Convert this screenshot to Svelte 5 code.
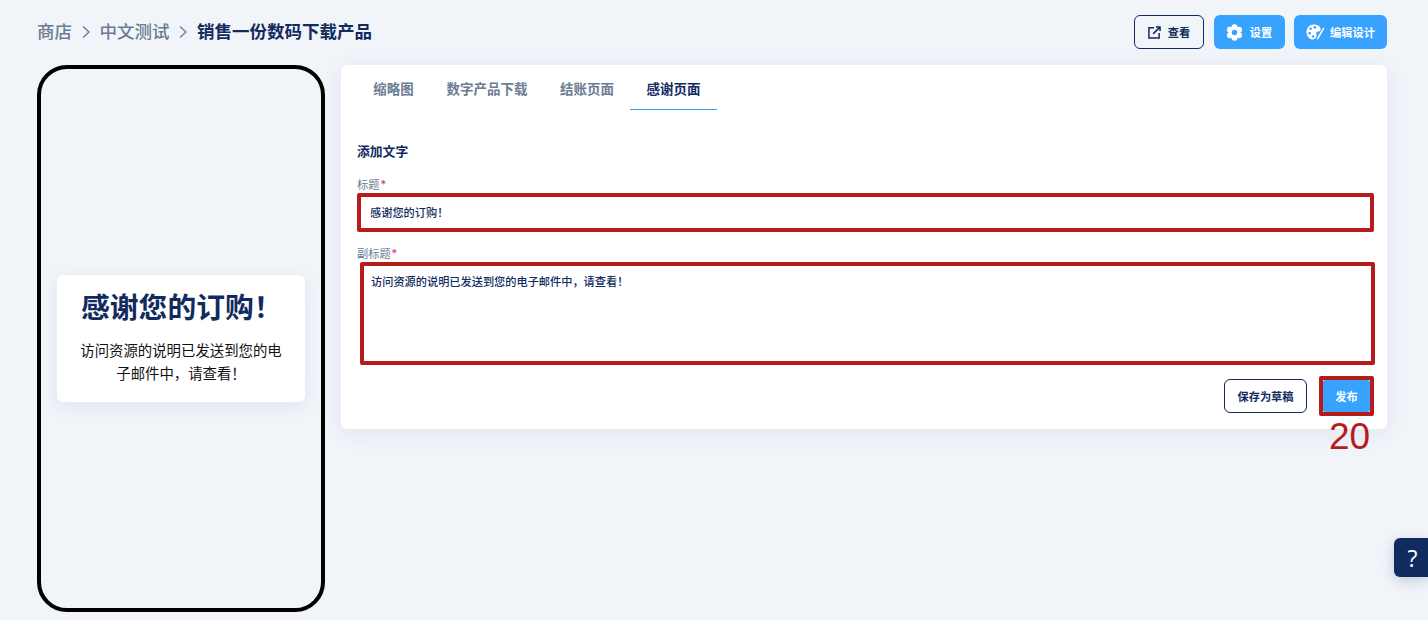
<script>
	const tabs = ['缩略图', '数字产品下载', '结账页面', '感谢页面'];
	let active = 3;
	let title = '感谢您的订购！';
	let subtitle = '访问资源的说明已发送到您的电子邮件中，请查看！';
</script>

<div class="page">
	<header class="topbar">
		<nav class="crumbs">
			<span>商店</span>
			<svg viewBox="0 0 10 14" width="10" height="14"><path d="M2 1.500l6 5.500-6 5.500" fill="none" stroke="#6b7c93" stroke-width="1.300"/></svg>
			<span>中文测试</span>
			<svg viewBox="0 0 10 14" width="10" height="14"><path d="M2 1.500l6 5.500-6 5.500" fill="none" stroke="#6b7c93" stroke-width="1.300"/></svg>
			<span class="current">销售一份数码下载产品</span>
		</nav>
		<div class="actions">
			<button class="btn outline view">
				<svg viewBox="0 0 14 14" width="13" height="13" fill="none" stroke="#122b5e" stroke-width="1.600">
					<path d="M6.500 1.800H1v11h11V7.500"/>
					<path d="M5.500 8.500L12.500 1.500M8.500 1h4.500v4.500"/>
				</svg>
				查看
			</button>
			<button class="btn primary settings">
				<svg viewBox="0 0 24 24" width="17" height="17">
					<g fill="#fff">
						<circle cx="12" cy="4.500" r="4.200"/>
						<circle cx="12" cy="19.500" r="4.200"/>
						<circle cx="5.500" cy="8.200" r="4.200"/>
						<circle cx="18.500" cy="8.200" r="4.200"/>
						<circle cx="5.500" cy="15.800" r="4.200"/>
						<circle cx="18.500" cy="15.800" r="4.200"/>
						<circle cx="12" cy="12" r="7"/>
					</g>
					<circle cx="12" cy="12" r="3.800" fill="#38a3ff"/>
				</svg>
				设置
			</button>
			<button class="btn primary design">
				<svg viewBox="0 0 20 18" width="19" height="17">
					<path fill="#fff" d="M8 .5c4.500 0 7.500 2.300 7.500 5 0 1.800-1.300 2.500-2.700 2.500-1.500 0-2.300 1-1.900 2.200.5 1.500.3 3.200-.6 4.400-1 1.400-2.800 2.200-4.600 1.700C2.500 15.200.5 12.300.5 8.800.5 4 3.800.5 8 .5z"/>
					<circle cx="4.800" cy="5" r="1.400" fill="#38a3ff"/>
					<circle cx="9.300" cy="3.600" r="1.400" fill="#38a3ff"/>
					<circle cx="3.800" cy="9.800" r="1.400" fill="#38a3ff"/>
					<circle cx="7.500" cy="13.200" r="1.300" fill="#38a3ff"/>
					<path d="M19.500 4.500L13.500 15l-1.800 2 .3-2.700L18 4z" fill="#fff"/>
				</svg>
				编辑设计
			</button>
		</div>
	</header>

	<main class="content">
		<section class="phone">
			<div class="thanks">
				<h1>{title}</h1>
				<p>{subtitle}</p>
			</div>
		</section>

		<section class="panel">
			<div class="tabs">
				{#each tabs as tab, i}
					<button class="tab" class:active={i === active} onclick={() => (active = i)}>{tab}</button>
				{/each}
			</div>

			<div class="form">
				<h2>添加文字</h2>

				<label for="title">标题<i>*</i></label>
				<div class="mark title-mark">
					<input id="title" bind:value={title} />
				</div>

				<label for="subtitle" class="second">副标题<i>*</i></label>
				<div class="mark subtitle-mark">
					<textarea id="subtitle" bind:value={subtitle}></textarea>
				</div>

				<div class="form-actions">
					<button class="btn outline draft">保存为草稿</button>
					<div class="mark publish-mark">
						<button class="btn primary publish">发布</button>
						<span class="step">20</span>
					</div>
				</div>
			</div>
		</section>
	</main>

	<button class="help">?</button>
</div>

<style>
	:global(body) {
		background: #f1f4f9;
		font-family: Inter, "Noto Sans CJK SC", sans-serif;
	}

	.page {
		height: 620px;
		overflow: hidden;
		padding: 15px 41px 0 37px;
		box-sizing: border-box;
		position: relative;
	}

	.topbar {
		display: flex;
		justify-content: space-between;
		align-items: center;
		height: 34px;
		margin-bottom: 16px;
	}

	.crumbs {
		display: flex;
		align-items: center;
		gap: 8.750px;
		font-size: 17.500px;
		line-height: 34px;
		font-weight: 500;
		color: #6b7c93;
		margin-top: -1px;
	}

	.crumbs .current {
		color: #122b5e;
		font-weight: 600;
	}

	.actions {
		display: flex;
		gap: 9.500px;
	}

	.btn {
		display: flex;
		align-items: center;
		justify-content: center;
		gap: 7px;
		height: 34px;
		box-sizing: border-box;
		border-radius: 6px;
		font-family: inherit;
		font-size: 11.200px;
		font-weight: 600;
		padding: 0;
	}

	.outline {
		background: transparent;
		border: 1px solid #122b5e;
		color: #122b5e;
	}

	.primary {
		background: #38a3ff;
		border: none;
		color: #fff;
	}

	.view { width: 70px; }
	.settings { width: 71px; }
	.design { width: 93px; gap: 5px; }

	.content {
		display: flex;
		align-items: flex-start;
		gap: 16px;
	}

	.phone {
		width: 288px;
		height: 547px;
		flex: none;
		box-sizing: border-box;
		border: 4px solid #000;
		border-radius: 30px;
		display: flex;
		align-items: center;
		justify-content: center;
	}

	.thanks {
		width: 248px;
		height: 127px;
		box-sizing: border-box;
		padding: 15px 23px 0;
		background: #fff;
		border-radius: 6px;
		box-shadow: 0 4px 20px rgba(18, 43, 94, 0.08);
		margin-top: -1px;
	}

	.thanks h1 {
		margin: 0 0 13px;
		padding-left: 1px;
		font-size: 28.800px;
		line-height: 36px;
		font-weight: 600;
		color: #122b5e;
		white-space: nowrap;
	}

	.thanks p {
		margin: 0;
		font-size: 14.400px;
		line-height: 23px;
		color: #111;
		text-align: center;
	}

	.panel {
		flex: 1;
		height: 364px;
		background: #fff;
		border-radius: 6px;
		box-shadow: 0 4px 24px rgba(18, 43, 94, 0.07);
	}

	.tabs {
		display: flex;
		padding: 0 16px;
		height: 45px;
	}

	.tab {
		background: none;
		border: none;
		border-bottom: 1px solid transparent;
		padding: 2px 16.300px 0;
		font-family: inherit;
		font-size: 13.500px;
		font-weight: 600;
		color: #6b7c93;
	}

	.tab.active {
		color: #122b5e;
		border-bottom-color: #38a3ff;
	}

	.form {
		padding: 34px 16px 0;
	}

	.form h2 {
		margin: 0 0 18px;
		font-size: 12.800px;
		line-height: 16px;
		font-weight: 600;
		color: #122b5e;
	}

	label {
		display: block;
		font-size: 11.200px;
		line-height: 14px;
		color: #6b7c93;
	}

	label.second {
		margin-top: 15px;
	}

	label i {
		color: #e5265f;
		font-style: normal;
		margin-left: 1px;
	}

	.mark {
		box-sizing: border-box;
		border: 4px solid #b71c1c;
		position: relative;
	}

	.title-mark {
		margin: 1px -3px 0 0;
		height: 39px;
		border-radius: 2px;
	}

	.subtitle-mark {
		margin: 1px -4px 0 3px;
		height: 103px;
		border-radius: 2px;
	}

	input, textarea {
		display: block;
		width: 100%;
		height: 100%;
		box-sizing: border-box;
		border: none;
		outline: none;
		background: #fff;
		resize: none;
		font-family: inherit;
		font-size: 11.200px;
		font-weight: 500;
		color: #122b5e;
	}

	input {
		padding: 0 9px 2px;
	}

	textarea {
		padding: 7px;
	}

	.form-actions {
		display: flex;
		justify-content: flex-end;
		align-items: center;
		gap: 12px;
		margin: 11px -3px 0 0;
	}

	.draft {
		width: 83px;
	}

	.publish-mark {
		width: 55px;
		height: 40px;
		border-radius: 2px;
	}

	.publish {
		width: 100%;
		height: 100%;
		border-radius: 2px;
	}

	.step {
		position: absolute;
		left: 6px;
		top: 35px;
		font-family: "Liberation Sans", Arial, sans-serif;
		font-size: 37px;
		line-height: 44px;
		color: #b71c1c;
	}

	.help {
		position: absolute;
		right: 0;
		top: 538px;
		width: 34px;
		height: 39px;
		padding: 0 0 0 3px;
		border: none;
		border-radius: 6px 0 0 6px;
		background: #122b5e;
		color: #fff;
		font-family: "Open Sans", sans-serif;
		font-size: 23px;
		font-weight: 400;
		box-shadow: 0 4px 14px rgba(18, 43, 94, 0.2);
	}
</style>
